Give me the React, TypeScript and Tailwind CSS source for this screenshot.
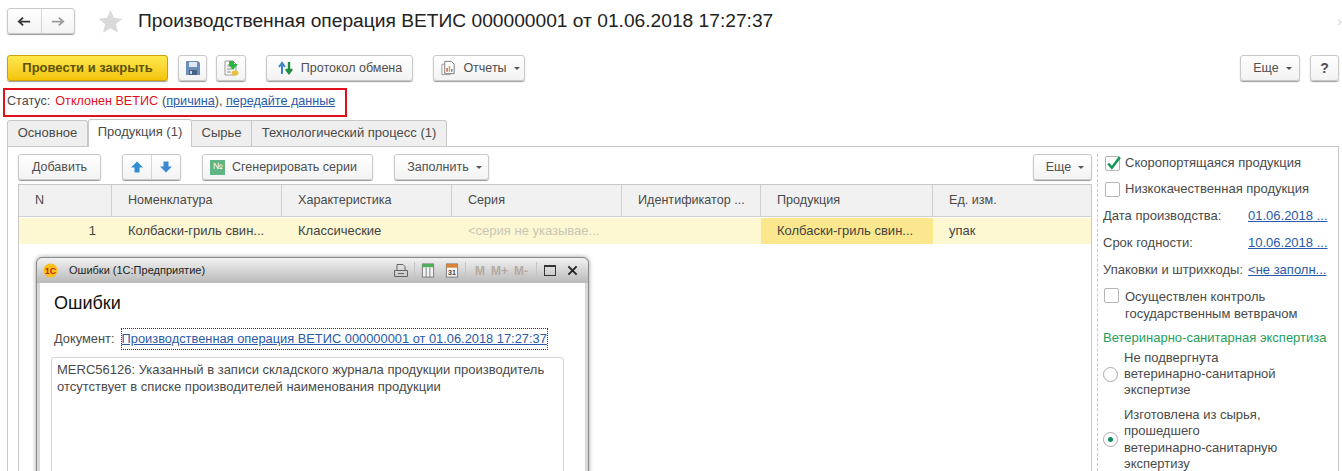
import type { ReactNode } from 'react';

const columns = [
  { title: 'N', width: 'w-[93px]' },
  { title: 'Номенклатура', width: 'w-[170px]' },
  { title: 'Характеристика', width: 'w-[170px]' },
  { title: 'Серия', width: 'w-[170px]' },
  { title: 'Идентификатор ...', width: 'w-[139px]' },
  { title: 'Продукция', width: 'w-[172px]' },
  { title: 'Ед. изм.', width: 'flex-1' },
];

function Btn({ className = '', children }: { className?: string; children: ReactNode }) {
  return (
    <div
      className={`flex h-[26px] shrink-0 items-center justify-center rounded-[3px] border border-[#c9c9c9] bg-gradient-to-b from-white to-[#f3f3f3] text-[12.5px] text-[#4f4f4f] shadow-[0_1px_1px_#9a9a9a] ${className}`}
    >
      {children}
    </div>
  );
}

function Caret() {
  return <span className="ml-[7px] mt-[1px] h-0 w-0 border-x-[3px] border-t-[3px] border-x-transparent border-t-[#555]" />;
}

function Checkbox({ checked = false }: { checked?: boolean }) {
  return (
    <div className="relative h-[15px] w-[15px] shrink-0 rounded-[2px] border border-[#b5b5b5] bg-white">
      {checked && (
        <svg viewBox="0 0 16 16" className="absolute -left-[1px] -top-[2px] h-[17px] w-[17px]">
          <path d="M3 8l3.5 4L14 2" fill="none" stroke="#139a5b" strokeWidth="2.4" />
        </svg>
      )}
    </div>
  );
}

function Radio({ checked = false }: { checked?: boolean }) {
  return (
    <div className="flex h-[15px] w-[15px] shrink-0 items-center justify-center rounded-full border border-[#aaa] bg-white">
      {checked && <div className="h-[5px] w-[5px] rounded-full bg-[#0f8f5c]" />}
    </div>
  );
}

function DateRow({ label, value }: { label: string; value: string }) {
  return (
    <div className="flex h-[27px] items-center justify-between pr-[6px]">
      <span>{label}</span>
      <a className="w-[80px] whitespace-nowrap text-[#2a5aa8] underline">{value}</a>
    </div>
  );
}

function ErrorsWindow() {
  return (
    <div className="absolute left-[36px] top-[257px] h-[240px] w-[553px] rounded-t-[6px] border border-[#8b8b8b] bg-[#d8d8d8] px-[3px] shadow-[0_0_4px_#999]">
      <div className="-mx-[3px] flex h-[25px] items-center rounded-t-[6px] bg-gradient-to-b from-[#f2f2f2] to-[#b9b9b9] pl-[6px] pr-[10px] text-[11px] text-[#222]">
        <svg viewBox="0 0 16 16" className="h-[15px] w-[15px]">
          <circle cx="8" cy="8" r="7.5" fill="#f7c21c" />
          <text x="8" y="11.5" textAnchor="middle" fontSize="9.5" fontWeight="700" fill="#c8281e" fontFamily="Liberation Sans">
            1С
          </text>
        </svg>
        <span className="ml-[11px]">Ошибки (1С:Предприятие)</span>
        <div className="ml-auto flex items-center">
          <svg viewBox="0 0 16 16" className="h-[16px] w-[16px]" fill="none" stroke="#666">
            <path d="M4 7V1.5h6l2 2V7M1.500 7.500h13v6h-13zM5 10.500h6" />
          </svg>
          <div className="ml-[5px] h-[18px] w-px bg-[#c4c4c4]" />
          <svg viewBox="0 0 14 16" className="ml-[6px] h-[15px] w-[14px]">
            <rect x="1" y="1" width="12" height="14" fill="#f4f4f4" stroke="#777" />
            <rect x="1" y="1" width="12" height="3.500" fill="#4fb05a" />
            <path d="M5 5v10M9 5v10" stroke="#777" />
          </svg>
          <svg viewBox="0 0 14 16" className="ml-[10px] h-[15px] w-[14px]">
            <rect x="1" y="1" width="12" height="14" fill="#f6f6f6" stroke="#777" />
            <rect x="1" y="1" width="12" height="4" fill="#d9843a" />
            <text x="7" y="13" textAnchor="middle" fontSize="7.500" fontWeight="700" fill="#444" fontFamily="Liberation Sans">
              31
            </text>
          </svg>
          <div className="ml-[6px] h-[18px] w-px bg-[#c4c4c4]" />
          <span className="ml-[9px] text-[12px] font-bold text-[#b3a9a2]">M</span>
          <span className="ml-[6px] text-[12px] font-bold text-[#b3a9a2]">M+</span>
          <span className="ml-[6px] text-[12px] font-bold text-[#b3a9a2]">M-</span>
          <div className="ml-[8px] h-[18px] w-px bg-[#c4c4c4]" />
          <div className="ml-[7px] h-[11px] w-[12px] border border-t-2 border-[#333]" />
          <svg viewBox="0 0 12 12" className="ml-[11px] h-[11px] w-[11px]">
            <path d="M1.500 1.500l9 9M10.500 1.500l-9 9" stroke="#222" strokeWidth="2" />
          </svg>
        </div>
      </div>
      <div className="h-full bg-white pl-[14px] text-[#4a4a4a]">
        <h2 className="pt-[9px] text-[18px] leading-[22px] text-[#111]">Ошибки</h2>
        <div className="mt-[16px] flex h-[18px] items-center text-[12.85px]">
          <span>Документ:</span>
          <a className="ml-[6px] whitespace-nowrap border border-dotted border-[#333] text-[#2a5aa8] underline">
            Производственная операция ВЕТИС 000000001 от 01.06.2018 17:27:37
          </a>
        </div>
        <div className="-ml-[3px] mt-[9px] h-[200px] w-[513px] rounded-[3px] border border-[#d4d4d4] px-[5px] py-[3px] leading-[17px]">
          MERC56126: Указанный в записи складского журнала продукции производитель отсутствует в списке производителей наименования продукции
        </div>
      </div>
    </div>
  );
}

export default function App() {
  return (
    <div className="relative h-[471px] w-[1342px] overflow-hidden bg-white font-['Liberation_Sans',Arial,sans-serif] text-[13px] text-[#4a4a4a]">
      {/* Header */}
      <div className="mt-[9px] flex h-[24px] items-center pl-[7px]">
        <Btn className="h-[24px] w-[68px]">
          <div className="flex flex-1 justify-center text-[#333]">
            <svg viewBox="0 0 16 12" className="h-[11px] w-[14px]">
              <path d="M15 6H4M7 1.500L2 6l5 4.500" fill="none" stroke="#333" strokeWidth="2" />
            </svg>
          </div>
          <div className="h-full w-px bg-[#d6d6d6]" />
          <div className="flex flex-1 justify-center">
            <svg viewBox="0 0 16 12" className="h-[11px] w-[14px]">
              <path d="M1 6h11M9 1.500L14 6l-5 4.500" fill="none" stroke="#999" strokeWidth="2" />
            </svg>
          </div>
        </Btn>
        <svg viewBox="0 0 24 24" className="ml-[23px] h-[25px] w-[25px]">
          <path d="M12 1l3.300 7.500 8 .8-6 5.400 1.800 8L12 18.500 4.900 22.700l1.800-8-6-5.400 8-.8z" fill="#dadada" />
        </svg>
        <h1 className="ml-[15px] pt-[1px] text-[19.2px] text-[#222]">Производственная операция ВЕТИС 000000001 от 01.06.2018 17:27:37</h1>
        <span className="ml-auto text-[15px] text-[#d5d5d5]">›</span>
      </div>

      {/* Command bar */}
      <div className="mt-[22px] flex items-center pl-[7px] pr-[3px]">
        <div className="flex h-[26px] w-[161px] items-center justify-center rounded-[3px] border border-[#c9a400] bg-gradient-to-b from-[#ffe84a] to-[#f4c400] font-bold text-[#5c5200] shadow-[0_1px_1px_#9a9a9a]">
          Провести и закрыть
        </div>
        <Btn className="ml-[10px] w-[29px]">
          <svg viewBox="0 0 16 16" className="h-[16px] w-[16px]">
            <path d="M1 1h12l2 2v12H1z" fill="#6b8fb8" />
            <rect x="4" y="2" width="8" height="5" fill="#dfe7f0" />
            <rect x="4" y="10" width="8" height="5" fill="#46617f" />
            <rect x="5" y="11" width="2" height="3" fill="#cdd6e0" />
          </svg>
        </Btn>
        <Btn className="ml-[9px] w-[30px]">
          <svg viewBox="0 0 18 18" className="h-[18px] w-[18px]">
            <path d="M3 2h8l3 3v11H3z" fill="#fbfbfb" stroke="#999" />
            <path d="M5 7h5M5 10h5M5 13h4" stroke="#888" />
            <path d="M7 2h5v3h4l-5 6-5-6h1z" fill="#2fb344" />
            <ellipse cx="13" cy="14" rx="3.500" ry="2.500" fill="#e9bf3c" />
          </svg>
        </Btn>
        <Btn className="ml-[20px] w-[147px]">
          <svg viewBox="0 0 18 16" className="mr-[6px] h-[16px] w-[18px]">
            <path d="M5 14V5M2 7l3-4 3 4" fill="none" stroke="#3a87c8" strokeWidth="2" />
            <path d="M12 2v9M9 9l3 4 3-4" fill="none" stroke="#1f8f3f" strokeWidth="2.400" />
          </svg>
          Протокол обмена
        </Btn>
        <Btn className="ml-[20px] w-[92px] pl-[2px]">
          <svg viewBox="0 0 18 16" className="mr-[6px] h-[16px] w-[17px]">
            <path d="M5 1h7l3 3v10H5z" fill="#fff" stroke="#777" />
            <path d="M2 4h3M2 4v11h9" fill="none" stroke="#999" />
            <path d="M7.500 12V8" stroke="#d9534f" strokeWidth="1.500" />
            <path d="M10 12V6" stroke="#d39a2f" strokeWidth="1.500" />
            <path d="M12.500 12V9" stroke="#4a7fb5" strokeWidth="1.500" />
          </svg>
          Отчеты
          <Caret />
        </Btn>
        <Btn className="ml-auto w-[60px] pl-[5px]">
          Еще
          <Caret />
        </Btn>
        <Btn className="ml-[10px] w-[29px] !text-[14px] font-bold">?</Btn>
      </div>

      {/* Status */}
      <div className="ml-[3px] mt-[7px] flex h-[29px] w-[344px] items-center whitespace-nowrap border-2 border-[#e0101c] pb-[3px] pl-[2px] text-[12.6px]">
        <span>Статус:</span>
        <span className="ml-[5px] text-[#e0101c]">Отклонен ВЕТИС</span>
        <span className="ml-[4px]">
          (<a className="text-[#2a5aa8] underline">причина</a>),{' '}
          <a className="text-[#2a5aa8] underline">передайте данные</a>
        </span>
      </div>

      {/* Tabs */}
      <div className="ml-[7px] mt-[2px] flex h-[27px] items-end">
        <div className="flex h-[26px] w-[81px] items-center justify-center rounded-t-[3px] border border-b-0 border-[#c8c8c8] bg-[#efefef] pb-[2px]">Основное</div>
        <div className="z-10 -mb-px flex h-[28px] w-[104px] items-center justify-center rounded-t-[3px] border border-b-0 border-[#c8c8c8] bg-white pb-[3px]">Продукция (1)</div>
        <div className="flex h-[26px] w-[60px] items-center justify-center border-t border-r border-[#c8c8c8] bg-[#efefef] pb-[2px]">Сырье</div>
        <div className="flex h-[26px] w-[195px] items-center justify-center rounded-tr-[3px] border-t border-r border-[#c8c8c8] bg-[#efefef] pb-[2px]">Технологический процесс (1)</div>
      </div>

      {/* Tab panel */}
      <div className="ml-[7px] mr-[3px] flex h-[340px] border-l border-r border-t border-[#c8c8c8] pl-[10px] pt-[7px]">
        <div className="w-[1074px] shrink-0">
          <div className="flex items-center">
            <Btn className="w-[83px]">Добавить</Btn>
            <div className="ml-[21px] flex h-[26px] w-[59px] items-center rounded-[3px] border border-[#c9c9c9] bg-gradient-to-b from-white to-[#f3f3f3] shadow-[0_1px_1px_#9a9a9a]">
              <div className="flex flex-1 justify-center">
                <svg viewBox="0 0 12 12" className="h-[12px] w-[12px]">
                  <path d="M6 .5L12 6.500H8.500V11.500H3.500V6.500H0z" fill="#2f8fd6" />
                </svg>
              </div>
              <div className="h-full w-px bg-[#d6d6d6]" />
              <div className="flex flex-1 justify-center">
                <svg viewBox="0 0 12 12" className="h-[12px] w-[12px]">
                  <path d="M6 11.500L12 5.500H8.500V.5H3.500V5.500H0z" fill="#3d8ad0" />
                </svg>
              </div>
            </div>
            <Btn className="ml-[21px] w-[171px] !justify-start pl-[7px]">
              <span className="mr-[7px] flex h-[15px] w-[15px] items-center justify-center bg-[#5fb583] text-[9px] text-white">№</span>
              Сгенерировать серии
            </Btn>
            <Btn className="ml-[21px] w-[95px] pl-[6px]">
              Заполнить
              <Caret />
            </Btn>
            <Btn className="ml-auto w-[59px] pl-[5px]">
              Еще
              <Caret />
            </Btn>
          </div>

          <div className="mt-[4px] h-[290px] border border-b-0 border-[#c8c8c8]">
            <div className="flex h-[32px] border-b border-[#d0d0d0] bg-[#f1f1f1] text-[12.6px]">
              {columns.map((c) => (
                <div key={c.title} className={`${c.width} flex items-center whitespace-nowrap border-r border-[#d0d0d0] pl-[16px] last:border-r-0`}>
                  {c.title}
                </div>
              ))}
            </div>
            <div className="mt-[1px] flex h-[26px] items-center whitespace-nowrap bg-[#fdf7d2] text-[#444]">
              <div className="w-[93px] pr-[16px] text-right">1</div>
              <div className="w-[170px] pl-[16px]">Колбаски-гриль свин...</div>
              <div className="w-[170px] pl-[16px]">Классические</div>
              <div className="w-[170px] pl-[16px] text-[#c8c8b4]">&lt;серия не указывае...</div>
              <div className="w-[139px]" />
              <div className="flex h-full w-[172px] items-center bg-[#fbe88e] pl-[16px]">Колбаски-гриль свин...</div>
              <div className="flex-1 pl-[16px]">упак</div>
            </div>
          </div>
        </div>

        <div className="ml-[5px] w-[237px] whitespace-nowrap border-l border-dashed border-[#c8c8c8] pl-[5px] leading-[16px]">
          <div className="flex h-[18px] items-center pl-[2px]">
            <Checkbox checked />
            <span className="ml-[5px]">Скоропортящаяся продукция</span>
          </div>
          <div className="mt-[8px] flex h-[18px] items-center pl-[2px]">
            <Checkbox />
            <span className="ml-[5px]">Низкокачественная продукция</span>
          </div>
          <div className="mt-[4px]">
            <DateRow label="Дата производства:" value="01.06.2018 ..." />
            <DateRow label="Срок годности:" value="10.06.2018 ..." />
            <div className="flex h-[27px] items-center">
              <span>Упаковки и штрихкоды:</span>
              <a className="ml-[5px] text-[#2a5aa8] underline">&lt;не заполн...</a>
            </div>
          </div>
          <div className="mt-[5px] flex items-start pl-[1px] leading-[17px]">
            <Checkbox />
            <span className="ml-[6px]">
              Осуществлен контроль
              <br />
              государственным ветврачом
            </span>
          </div>
          <div className="mt-[8px] text-[#1f9e5c]">Ветеринарно-санитарная экспертиза</div>
          <div className="mt-[4px] flex items-center">
            <Radio />
            <span className="ml-[6px]">
              Не подвергнута
              <br />
              ветеринарно-санитарной
              <br />
              экспертизе
            </span>
          </div>
          <div className="mt-[9px] flex items-center leading-[16.3px]">
            <Radio checked />
            <span className="ml-[6px]">
              Изготовлена из сырья,
              <br />
              прошедшего
              <br />
              ветеринарно-санитарную
              <br />
              экспертизу
            </span>
          </div>
        </div>
      </div>

      <ErrorsWindow />
    </div>
  );
}
